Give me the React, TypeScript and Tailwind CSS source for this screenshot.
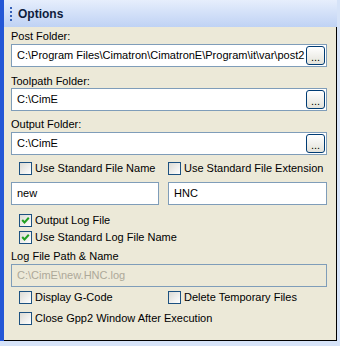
import React from "react";

const font = { fontFamily: '"Liberation Sans", Arial, sans-serif' };

function Browse() {
  return (
    <div className="absolute right-[1px] top-[1px] w-[19px] h-[19px] rounded-[3px] border border-[#003C74] bg-gradient-to-b from-[#FFFFFF] to-[#E3E2DA] flex items-end justify-center pb-[3px] text-[11px] leading-[8px] text-black">
      ...
    </div>
  );
}

function Field({ value, browse, disabled }: { value: string; browse?: boolean; disabled?: boolean }) {
  return (
    <div
      className={`relative w-full h-[23px] border border-[#7F9DB9] ${
        disabled ? "bg-[#ECE9D8] text-[#ACA899]" : "bg-white text-black"
      } flex items-center pl-[5px] text-[11px] whitespace-nowrap overflow-hidden`}
    >
      {value}
      {browse && <Browse />}
    </div>
  );
}

function Check({ label, checked }: { label: string; checked?: boolean }) {
  return (
    <div className="flex items-center gap-[3px] h-[13px] text-[11px] text-black whitespace-nowrap">
      <div className="w-[13px] h-[13px] shrink-0 border border-[#1C5180] bg-gradient-to-br from-[#DCDBD5] to-[#FFFFFF] flex items-center justify-center">
        {checked && (
          <svg width="9" height="9" viewBox="0 0 9 9">
            <path d="M1.2 4 L3.5 6.5 L7.8 1.8" stroke="#21A121" strokeWidth="2" fill="none" />
          </svg>
        )}
      </div>
      <span>{label}</span>
    </div>
  );
}

export default function App() {
  return (
    <div className="w-[340px] h-[346px] bg-[#D6E3F8] flex flex-col overflow-hidden" style={font}>
      <div className="flex h-[341px] shrink-0">
        <div className="w-[4px] shrink-0 bg-[#2457D6]" />
        <div className="w-[333px] shrink-0 flex flex-col">
          <div className="h-[27px] shrink-0 bg-gradient-to-b from-[#E6EEFC] to-[#BFD2F4] flex items-center pl-[6px] gap-[6px]">
            <div className="flex flex-col gap-[2px]">
              {[0, 1, 2, 3].map((i) => (
                <div key={i} className="w-[2px] h-[2px] bg-[#3560B8]" />
              ))}
            </div>
            <span className="text-[12px] font-bold text-[#101C3C]">Options</span>
          </div>
          <div className="h-[314px] shrink-0 bg-[#ECE9D8] border-r border-b border-black pl-[7px] pr-[9px] pt-[3px] flex flex-col text-[11px] text-black">
            <div className="h-[13px] leading-[13px]">Post Folder:</div>
            <div className="mt-[1px]">
              <Field value="C:\Program Files\Cimatron\CimatronE\Program\it\var\post2" browse />
            </div>
            <div className="mt-[8px] h-[13px] leading-[13px]">Toolpath Folder:</div>
            <div>
              <Field value="C:\CimE" browse />
            </div>
            <div className="mt-[7px] h-[13px] leading-[13px]">Output Folder:</div>
            <div className="mt-[1px]">
              <Field value="C:\CimE" browse />
            </div>
            <div className="mt-[7px] flex pl-[8px]">
              <div className="w-[149px] shrink-0">
                <Check label="Use Standard File Name" />
              </div>
              <Check label="Use Standard File Extension" />
            </div>
            <div className="mt-[7px] flex gap-[9px]">
              <div className="w-[148px] shrink-0">
                <Field value="new" />
              </div>
              <div className="flex-1 min-w-0">
                <Field value="HNC" />
              </div>
            </div>
            <div className="mt-[9px] pl-[8px] flex flex-col gap-[4px]">
              <Check label="Output Log File" checked />
              <Check label="Use Standard Log File Name" checked />
            </div>
            <div className="mt-[6px] h-[13px] leading-[13px]">Log File Path &amp; Name</div>
            <div className="mt-[1px]">
              <Field value="C:\CimE\new.HNC.log" disabled />
            </div>
            <div className="mt-[4px] flex pl-[8px]">
              <div className="w-[149px] shrink-0">
                <Check label="Display G-Code" />
              </div>
              <Check label="Delete Temporary Files" />
            </div>
            <div className="mt-[8px] pl-[8px]">
              <Check label="Close Gpp2 Window After Execution" />
            </div>
          </div>
        </div>
      </div>
    </div>
  );
}
